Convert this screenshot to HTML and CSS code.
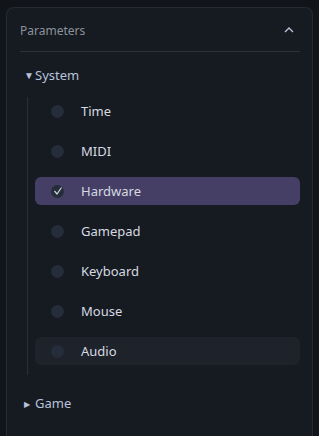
FILE: index.html
```html
<!DOCTYPE html>
<html>
<head>
<meta charset="utf-8">
<link rel="stylesheet" href="styles.css">
</head>
<body>
<div class="panel">
  <div class="header">
    <span class="title">Parameters</span>
    <svg class="chev" width="10" height="6" viewBox="0 0 10 6"><path d="M1 5 L5 1 L9 5" fill="none" stroke="#b8c2d6" stroke-width="1.4"/></svg>
  </div>
  <div class="group">
    <div class="group-head"><span class="tri">▼</span>System</div>
    <div class="tree">
      <div class="item"><span class="dot"></span><span class="label">Time</span></div>
      <div class="item"><span class="dot"></span><span class="label">MIDI</span></div>
      <div class="item selected"><span class="dot checked"><svg width="10" height="10" viewBox="0 0 10 10"><path d="M1.5 5 L4 8 L8.5 1.5" fill="none" stroke="#cfd6e4" stroke-width="1.2"/></svg></span><span class="label">Hardware</span></div>
      <div class="item"><span class="dot"></span><span class="label">Gamepad</span></div>
      <div class="item"><span class="dot"></span><span class="label">Keyboard</span></div>
      <div class="item"><span class="dot"></span><span class="label">Mouse</span></div>
      <div class="item hover"><span class="dot"></span><span class="label">Audio</span></div>
    </div>
  </div>
  <div class="group">
    <div class="group-head closed"><span class="tri small">▶</span>Game</div>
  </div>
</div>
</body>
</html>
```
FILE: styles.css
```css
html, body {
  margin: 0;
  padding: 0;
  background: #111419;
  height: 100%;
  overflow: hidden;
  font-family: "Noto Sans", "Open Sans", sans-serif;
}
body {
  padding: 7px 6px 0 6px;
  box-sizing: border-box;
}
.panel {
  border: 1px solid #262a31;
  border-bottom: none;
  border-radius: 8px 8px 0 0;
  background: #161a21;
  height: 429px;
  padding: 0 12px 0 13px;
  box-sizing: border-box;
}
.header {
  height: 42px;
  display: flex;
  align-items: center;
  justify-content: space-between;
  border-bottom: 1px solid #2c3139;
  padding-top: 1px;
  padding-right: 6px;
}
.title {
  color: #8b929c;
  font-size: 12px;
}
.chev { margin-top: -1px; }
.group-head {
  color: #b6c3dc;
  font-size: 13px;
  height: 20px;
  display: flex;
  align-items: center;
  margin-top: 13px;
  padding-left: 4px;
}
.tri {
  font-size: 10px;
  width: 11px;
  display: inline-block;
}
.tri.small { font-size: 8px; }
.tree {
  margin-left: 7px;
  border-left: 1px solid #2a2f37;
  padding: 0 0 10px 7px;
  margin-top: 12px;
}
.item {
  height: 28px;
  margin-bottom: 12px;
  display: flex;
  align-items: center;
  border-radius: 6px;
}
.item:last-child { margin-bottom: 0; }
.item.selected { background: #453f66; }
.item.hover { background: #1d222b; }
.dot {
  width: 13px;
  height: 13px;
  border-radius: 50%;
  background: #252d3a;
  margin-left: 16px;
  margin-right: 17px;
  display: flex;
  align-items: center;
  justify-content: center;
}
.label {
  color: #d6dae0;
  font-size: 13px;
}
.group-head.closed { margin-top: 18px; }
```
